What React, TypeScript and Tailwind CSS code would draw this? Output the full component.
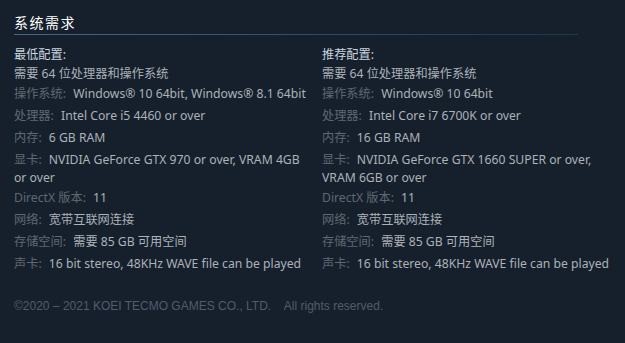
import React from "react";

type Row = { label: string; value: string; wrap?: boolean };

function Column({ title, rows }: { title: string; rows: Row[] }) {
  return (
    <div className="w-[296px] shrink-0">
      <div className="leading-[18px] mb-[1px] text-[#c6d4df]">{title}</div>
      <div className="leading-[18px] mb-[1.5px] text-[#acb2b8]">需要 64 位处理器和操作系统</div>
      <ul>
        {rows.map((r, i) => (
          <li
            key={i}
            className={
              r.wrap
                ? "leading-[18px] mb-[2px] text-[#acb2b8]"
                : "leading-[18px] mb-[4px] text-[#acb2b8]"
            }
          >
            <span className="text-[#5f6872]">{r.label}:</span>{" "}
            <span className="ml-[4px]">{r.value}</span>
          </li>
        ))}
      </ul>
    </div>
  );
}

export default function App() {
  const left: Row[] = [
    { label: "操作系统", value: "Windows® 10 64bit, Windows® 8.1 64bit" },
    { label: "处理器", value: "Intel Core i5 4460 or over" },
    { label: "内存", value: "6 GB RAM" },
    { label: "显卡", value: "NVIDIA GeForce GTX 970 or over, VRAM 4GB or over", wrap: true },
    { label: "DirectX 版本", value: "11" },
    { label: "网络", value: "宽带互联网连接" },
    { label: "存储空间", value: "需要 85 GB 可用空间" },
    { label: "声卡", value: "16 bit stereo, 48KHz WAVE file can be played" },
  ];
  const right: Row[] = [
    { label: "操作系统", value: "Windows® 10 64bit" },
    { label: "处理器", value: "Intel Core i7 6700K or over" },
    { label: "内存", value: "16 GB RAM" },
    { label: "显卡", value: "NVIDIA GeForce GTX 1660 SUPER or over, VRAM 6GB or over", wrap: true },
    { label: "DirectX 版本", value: "11" },
    { label: "网络", value: "宽带互联网连接" },
    { label: "存储空间", value: "需要 85 GB 可用空间" },
    { label: "声卡", value: "16 bit stereo, 48KHz WAVE file can be played" },
  ];

  return (
    <div className="min-h-[343px] w-[625px] bg-[#16202d] font-['Noto_Sans','Noto_Sans_CJK_SC',sans-serif] text-[12.2px] px-[14px] pt-[13px]">
      <div className="text-[14px] leading-[20px] tracking-[1.5px] text-white">系统需求</div>
      <div className="mt-[1px] h-px w-[564px] bg-[linear-gradient(to_right,#3a6d8c_0%,#2c5572_45%,#1d364b_100%)]" />
      <div className="mt-[11px] flex gap-[12px]">
        <Column title="最低配置:" rows={left} />
        <Column title="推荐配置:" rows={right} />
      </div>
      <div className="mt-[21px] font-['Liberation_Sans',sans-serif] text-[12px] leading-[16px] text-[#4f5d6b]">
        ©2020 – 2021 KOEI TECMO GAMES CO., LTD.{"\u00a0\u00a0\u00a0 "}All rights reserved.
      </div>
    </div>
  );
}
